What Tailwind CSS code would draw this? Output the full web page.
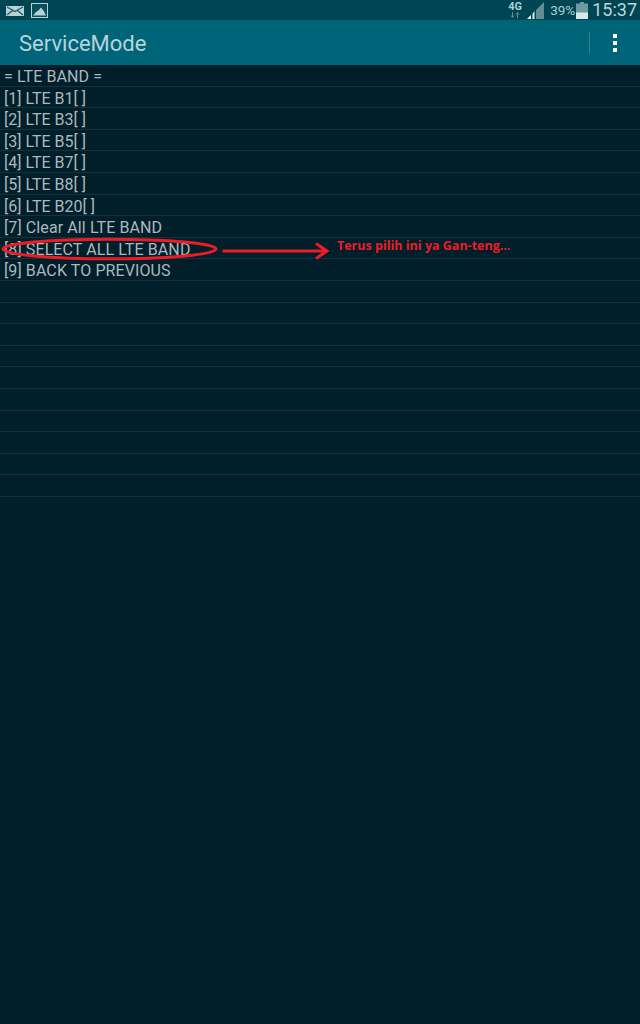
<!doctype html>
<html>
<head>
<meta charset="utf-8">
<script src="https://cdn.jsdelivr.net/npm/@tailwindcss/browser@4"></script>
</head>
<body class="m-0 bg-[#001f2b]">
<div class="relative w-[640px] h-[1024px] overflow-hidden bg-[#001f2b] font-['Roboto',sans-serif]">
  <!-- status bar -->
  <div class="h-5 bg-[#004553] flex items-center justify-between pl-[6px] pr-[3px] text-[#a9cfd4]">
    <div class="flex items-center gap-[7px]">
      <svg width="18" height="10" viewBox="0 0 18 10" class="mt-[1px]"><rect width="18" height="10" fill="#b5d3d6"/><path d="M1 1L9 5.500L17 1M1 9L6.500 4.500M17 9L11.500 4.500" stroke="#1c5a66" stroke-width="1.200" fill="none"/></svg>
      <svg width="17" height="15" viewBox="0 0 17 15"><rect x="0.500" y="0.500" width="16" height="14" fill="#0a4f5c" stroke="#b5d3d6"/><path d="M2 12.500L5 9L7.500 7.500L10 4.500L12.500 7.500L15 12.500Z" fill="#b5d3d6"/></svg>
    </div>
    <div class="flex items-center">
      <div class="flex flex-col items-center w-[16px] mr-[4px] -mt-[2px]">
        <span class="text-[11px] leading-[11px] font-bold">4G</span>
        <svg width="10" height="6" viewBox="0 0 10 6"><path d="M2.500 0V5M1 3.500L2.500 5.500L4 3.500" stroke="#5f8e96" fill="none"/><path d="M7.500 6V1M6 2.500L7.500 .5L9 2.500" stroke="#5f8e96" fill="none"/></svg>
      </div>
      <svg width="17" height="17" viewBox="0 0 17 17" class="mr-[6px]"><path d="M0 17L17 0V17Z" fill="#5f8e96"/><path d="M0 17L8 9V17Z" fill="#e2eeef"/><rect x="4" y="11" width="1.500" height="6" fill="#004553"/><rect x="7.500" y="8" width="1.500" height="9" fill="#004553"/></svg>
      <span class="text-[13.500px] leading-5 w-[25px] text-[#a9cfd4]">39%</span>
      <svg width="12" height="17" viewBox="0 0 12 17" class="ml-[1px] mr-[4px]"><path d="M4 0H8V1.500H12V17H0V1.500H4Z" fill="#6e9aa1"/><rect y="10.500" width="12" height="6.500" fill="#d8e8ea"/></svg>
      <span class="text-[18px] leading-5 text-[#b9d7db]">15:37</span>
    </div>
  </div>
  <!-- toolbar -->
  <div class="h-[45px] bg-[#006478] flex items-center justify-between pl-[19px] pr-[23px]">
    <span class="text-[22px] leading-[45px] pt-px text-[#b6d4d9]">ServiceMode</span>
    <div class="flex items-center">
      <div class="w-px h-[21px] bg-[#3f7f8d] mr-[23px]"></div>
      <div class="flex flex-col gap-[3px]">
        <div class="size-1 bg-white"></div>
        <div class="size-1 bg-white"></div>
        <div class="size-1 bg-white"></div>
      </div>
    </div>
  </div>
  <!-- list -->
  <div class="grid auto-rows-[21.6px] text-[16px] leading-[21px] tracking-[0.100px] text-[#adb8bc]">
    <div class="border-b border-[#14323c] pl-1 pt-px">= LTE BAND =</div>
    <div class="border-b border-[#14323c] pl-1 pt-px tracking-normal">[1] LTE B1[ ]</div>
    <div class="border-b border-[#14323c] pl-1 pt-px tracking-normal">[2] LTE B3[ ]</div>
    <div class="border-b border-[#14323c] pl-1 pt-px tracking-normal">[3] LTE B5[ ]</div>
    <div class="border-b border-[#14323c] pl-1 pt-px tracking-normal">[4] LTE B7[ ]</div>
    <div class="border-b border-[#14323c] pl-1 pt-px tracking-normal">[5] LTE B8[ ]</div>
    <div class="border-b border-[#14323c] pl-1 pt-px tracking-normal">[6] LTE B20[ ]</div>
    <div class="border-b border-[#14323c] pl-1 pt-px">[7] Clear All LTE BAND</div>
    <div class="border-b border-[#14323c] pl-1 pt-px">[8] SELECT ALL LTE BAND</div>
    <div class="border-b border-[#14323c] pl-1 pt-px">[9] BACK TO PREVIOUS</div>
    <div class="border-b border-[#14323c]"></div>
    <div class="border-b border-[#14323c]"></div>
    <div class="border-b border-[#14323c]"></div>
    <div class="border-b border-[#14323c]"></div>
    <div class="border-b border-[#14323c]"></div>
    <div class="border-b border-[#14323c]"></div>
    <div class="border-b border-[#14323c]"></div>
    <div class="border-b border-[#14323c]"></div>
    <div class="border-b border-[#14323c]"></div>
    <div class="border-b border-[#14323c]"></div>
  </div>
  <!-- annotation -->
  <svg class="absolute left-0 top-0" width="640" height="300" viewBox="0 0 640 300" fill="none">
    <ellipse cx="109.500" cy="249" rx="106.500" ry="9.800" stroke="#ed1c24" stroke-width="3"/>
    <path d="M222.500 251H326M316 243.500L327 251L316 258.500" stroke="#ed1c24" stroke-width="3"/>
  </svg>
  <span class="absolute left-[337px] top-[238px] text-[12.500px] leading-4 font-bold text-[#ed1c24] font-['Open_Sans',sans-serif]">Terus pilih ini ya Gan-teng...</span>
</div>
</body>
</html>
